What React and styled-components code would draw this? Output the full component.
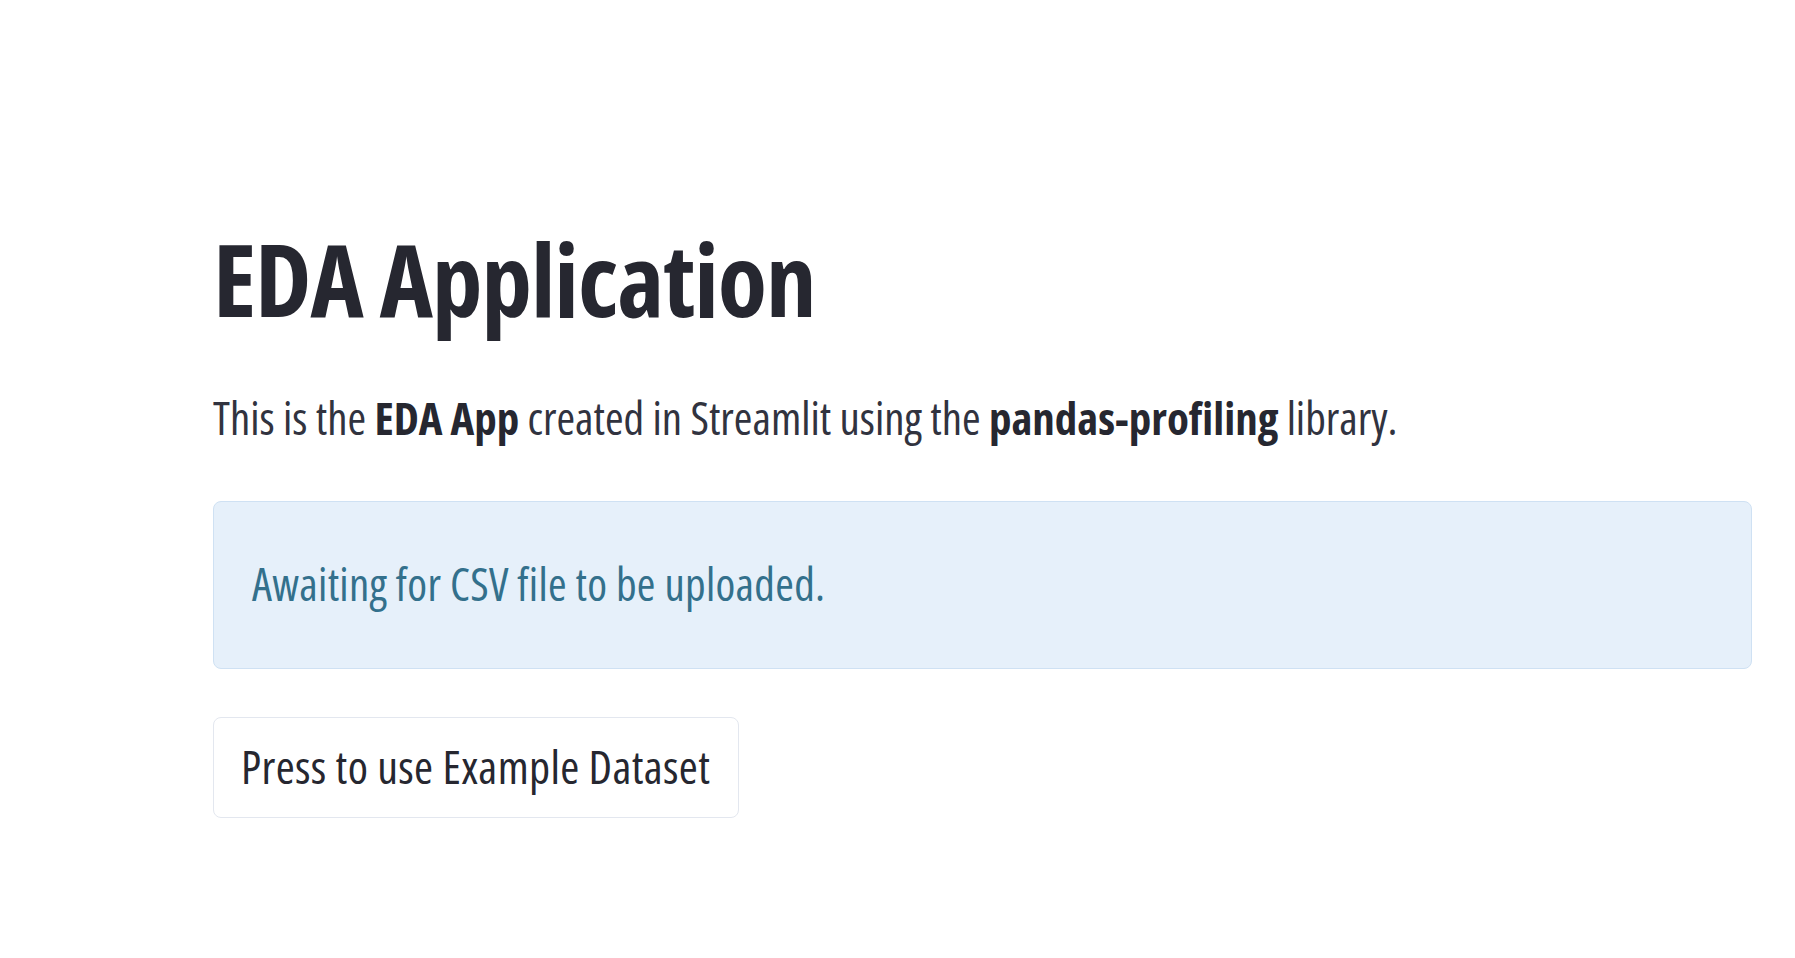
import React from "react";
import styled, { createGlobalStyle } from "styled-components";

const GlobalStyle = createGlobalStyle`
  html, body { margin: 0; padding: 0; background: #ffffff; }
  body {
    font-family: "Open Sans", "Roboto", sans-serif;
    font-stretch: 75%;
    color: #262730;
  }
  * { box-sizing: border-box; }
`;

const Main = styled.main`
  display: flex;
  flex-direction: column;
  align-items: flex-start;
  padding: 218px 43px 0 213px;
`;

const Title = styled.h1`
  margin: 0;
  font-size: 101px;
  line-height: 121px;
  font-weight: 700;
  letter-spacing: -1px;
  color: #262730;
`;

const Paragraph = styled.p`
  margin: 43px 0 0 0;
  font-size: 45px;
  line-height: 72px;
  font-weight: 400;
  color: #31333f;
  white-space: nowrap;

  strong {
    font-weight: 700;
    color: #262730;
  }
`;

const Alert = styled.div`
  align-self: stretch;
  margin-top: 47px;
  padding: 46px 38px 48px;
  background: #e6f0fa;
  border: 1px solid #cfe1f3;
  border-radius: 8px;
  font-size: 45px;
  line-height: 72px;
  letter-spacing: 0.3px;
  color: #33708c;
`;

const Button = styled.button`
  margin-top: 48px;
  padding: 12px 28px 15px 27px;
  background: #ffffff;
  border: 1px solid #e3e7ef;
  border-radius: 8px;
  font-family: inherit;
  font-stretch: 75%;
  font-size: 46px;
  line-height: 72px;
  letter-spacing: 0.37px;
  color: #262730;
  cursor: pointer;
`;

export default function App() {
  return (
    <>
      <GlobalStyle />
      <Main>
        <Title>EDA Application</Title>
        <Paragraph>
          This is the <strong>EDA App</strong> created in Streamlit using the{" "}
          <strong>pandas-profiling</strong> library.
        </Paragraph>
        <Alert>Awaiting for CSV file to be uploaded.</Alert>
        <Button type="button">Press to use Example Dataset</Button>
      </Main>
    </>
  );
}
